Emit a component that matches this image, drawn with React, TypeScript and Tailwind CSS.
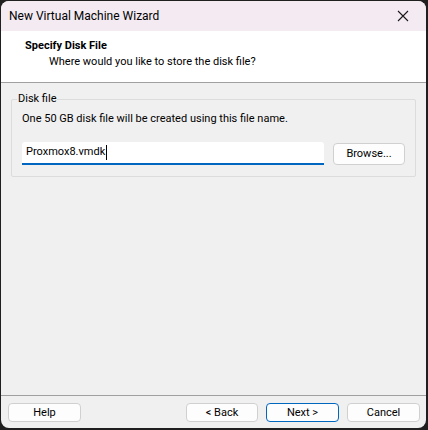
export default function App() {
  const font = { fontFamily: 'Roboto, Lato, sans-serif' }

  return (
    <div className="w-[428px] h-[430px] bg-[#1f1f1f] pl-px pt-px pr-[2px] pb-[2px]" style={font}>
      <div className="flex h-full flex-col overflow-hidden rounded-lg bg-[#f0f0f0] text-[11px] text-black">
        {/* title bar */}
        <div className="flex h-[30px] shrink-0 items-center justify-between bg-[#f4ebf2] pl-2">
          <span className="text-[12px] leading-none">New Virtual Machine Wizard</span>
          <div className="flex h-full w-[46px] items-center justify-center">
            <svg width="12" height="12" viewBox="0 0 12 12" fill="none" stroke="#1a1a1a" strokeWidth="1.1">
              <path d="M1 1 L11 11 M11 1 L1 11" />
            </svg>
          </div>
        </div>

        {/* header */}
        <div className="flex h-[52px] shrink-0 flex-col border-b border-[#a0a0a0] bg-white pl-[24px] pt-[7px]">
          <span className="font-bold leading-[16px]">Specify Disk File</span>
          <span className="pl-[24px] leading-[16px]">Where would you like to store the disk file?</span>
        </div>

        {/* body */}
        <div className="flex flex-1 flex-col px-[10px] pt-[9px]">
          <div className="relative mt-[7px] h-[78px] rounded-[2px] border border-[#dcdcdc]">
            <span className="absolute left-[5px] top-[-9px] bg-[#f0f0f0] px-[1px] leading-[16px]">Disk file</span>
            <div className="flex flex-col px-[10px] pt-[11px]">
              <span className="leading-[16px]">One 50 GB disk file will be created using this file name.</span>
              <div className="mt-[15px] flex items-center gap-[9px]">
                <div className="flex h-[23px] w-[302px] items-center rounded-t-[3px] border-b-2 border-[#0067c0] bg-white pl-[4px]">
                  <span>Proxmox8.vmdk</span>
                  <span className="ml-px h-[15px] w-px bg-black" />
                </div>
                <button className="h-[22px] w-[72px] rounded-[4px] border border-[#d0d0d0] bg-[#fdfdfd] text-center leading-none">
                  Browse...
                </button>
              </div>
            </div>
          </div>
        </div>

        {/* footer */}
        <div className="flex h-[33px] shrink-0 items-start border-t border-[#a0a0a0] pl-[7px] pr-[6px] pt-[7px]">
          <button className="h-[19px] w-[73px] rounded-[4px] border border-[#d0d0d0] bg-[#fdfdfd] leading-none">Help</button>
          <div className="ml-auto flex gap-[8px]">
            <button className="h-[19px] w-[72px] rounded-[4px] border border-[#d0d0d0] bg-[#fdfdfd] leading-none">&lt; Back</button>
            <button className="h-[19px] w-[73px] rounded-[4px] border border-[#0067c0] bg-[#fdfdfd] leading-none">Next &gt;</button>
            <button className="h-[19px] w-[73px] rounded-[4px] border border-[#d0d0d0] bg-[#fdfdfd] leading-none">Cancel</button>
          </div>
        </div>
      </div>
    </div>
  )
}
